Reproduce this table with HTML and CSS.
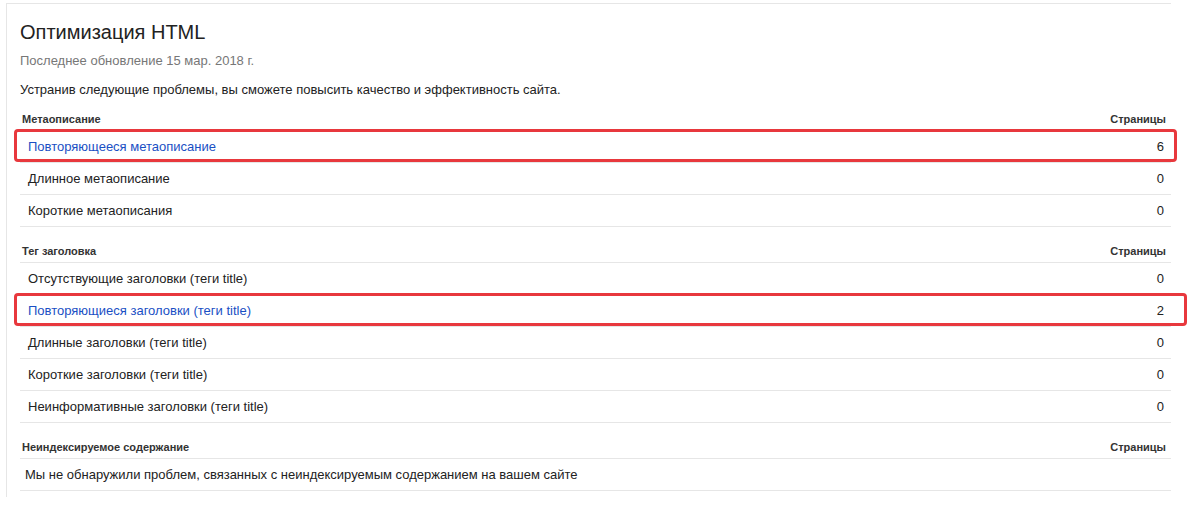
FILE: index.html
```html
<!DOCTYPE html>
<html lang="ru">
<head>
<meta charset="utf-8">
<title>Оптимизация HTML</title>
<link rel="stylesheet" href="styles.css">
</head>
<body>
<div class="card">
  <h1 class="title">Оптимизация HTML</h1>
  <div class="updated">Последнее обновление 15 мар. 2018 г.</div>
  <p class="desc">Устранив следующие проблемы, вы сможете повысить качество и эффективность сайта.</p>

  <section class="group first">
    <div class="head"><span>Метаописание</span><span>Страницы</span></div>
    <div class="row marked"><a class="link">Повторяющееся метаописание</a><span class="num">6</span><span class="mark m1"></span></div>
    <div class="row"><span>Длинное метаописание</span><span class="num">0</span></div>
    <div class="row"><span>Короткие метаописания</span><span class="num">0</span></div>
  </section>

  <section class="group">
    <div class="head"><span>Тег заголовка</span><span>Страницы</span></div>
    <div class="row"><span>Отсутствующие заголовки (теги title)</span><span class="num">0</span></div>
    <div class="row marked"><a class="link">Повторяющиеся заголовки (теги title)</a><span class="num">2</span><span class="mark m2"></span></div>
    <div class="row"><span>Длинные заголовки (теги title)</span><span class="num">0</span></div>
    <div class="row"><span>Короткие заголовки (теги title)</span><span class="num">0</span></div>
    <div class="row"><span>Неинформативные заголовки (теги title)</span><span class="num">0</span></div>
  </section>

  <section class="group">
    <div class="head"><span>Неиндексируемое содержание</span><span>Страницы</span></div>
    <div class="row note"><span>Мы не обнаружили проблем, связанных с неиндексируемым содержанием на вашем сайте</span></div>
  </section>
</div>
</body>
</html>
```
FILE: styles.css
```css
html, body {
  margin: 0;
  padding: 0;
  background: #fff;
}
body {
  font-family: "Liberation Sans", Arial, sans-serif;
  color: #222;
}
.card {
  margin: 3px 0 0 6px;
  width: 1151px;
  height: 493px;
  border-top: 1px solid #e6e6e6;
  border-left: 1px solid #e6e6e6;
  padding: 0 0 0 13px;
}
.title {
  margin: 0;
  padding-top: 16px;
  font-size: 20px;
  line-height: 24px;
  font-weight: normal;
  color: #222;
}
.updated {
  margin-top: 9px;
  font-size: 13px;
  line-height: 16px;
  color: #777;
}
.desc {
  margin: 13px 0 0;
  font-size: 13px;
  line-height: 16px;
  color: #222;
}
.group {
  margin-top: 0;
}
.head {
  display: flex;
  justify-content: space-between;
  padding: 17px 5px 4px 2px;
  font-size: 11px;
  line-height: 14px;
  font-weight: bold;
  color: #333;
  border-bottom: 1px solid #e6e6e6;
}
.group.first .head {
  padding-top: 14px;
}
.row {
  position: relative;
  display: flex;
  justify-content: space-between;
  align-items: center;
  height: 31px;
  padding: 0 7px 0 8px;
  font-size: 13px;
  border-bottom: 1px solid #e6e6e6;
  color: #222;
}
.row.note {
  padding-left: 5px;
}
.link {
  color: #1a4fc4;
  text-decoration: none;
}
.mark {
  position: absolute;
  top: -2px;
  bottom: 0;
  left: -6px;
  border: 3px solid #e8383d;
  border-radius: 4px;
  pointer-events: none;
}
.mark.m1 {
  right: -6px;
}
.mark.m2 {
  right: -16px;
}
```
